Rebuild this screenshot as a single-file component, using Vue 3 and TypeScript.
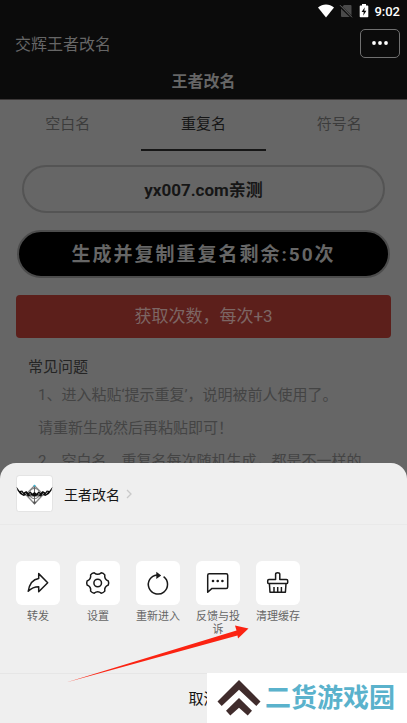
<script setup lang="ts">
import { ref } from 'vue'

type IconName = 'forward' | 'settings' | 'reload' | 'feedback' | 'clean'

interface Action {
  icon: IconName
  label: string
}

const tabs: string[] = ['空白名', '重复名', '符号名']
const activeTab = ref<number>(1)
const nickname = ref<string>('yx007.com亲测')
const remaining = ref<number>(50)

const faq: string[] = [
  '1、进入粘贴‘提示重复’，说明被前人使用了。',
  '请重新生成然后再粘贴即可！',
  '2、空白名、重复名每次随机生成，都是不一样的',
]

const actions: Action[] = [
  { icon: 'forward', label: '转发' },
  { icon: 'settings', label: '设置' },
  { icon: 'reload', label: '重新进入' },
  { icon: 'feedback', label: '反馈与投诉' },
  { icon: 'clean', label: '清理缓存' },
]

// Six-toothed gear outline with soft dips between the teeth
function gearPath(cx: number, cy: number, outer: number, dip: number): string {
  const at = (r: number, deg: number): string => {
    const a = (deg * Math.PI) / 180
    return `${(cx + r * Math.cos(a)).toFixed(2)} ${(cy + r * Math.sin(a)).toFixed(2)}`
  }
  let d = `M${at(outer, -11)}`
  for (let k = 0; k < 6; k++) {
    const t = k * 60
    d += `Q${at(outer + 0.6, t)} ${at(outer, t + 11)}Q${at(dip, t + 30)} ${at(outer, t + 49)}`
  }
  return d + 'Z'
}
const gear = gearPath(21.7, 22, 10.8, 7.4)
</script>

<template>
  <div class="screen">
    <header class="header">
      <div class="status">
        <svg class="status-icon wifi" viewBox="0 0 16 14" aria-hidden="true">
          <path d="M0 3.6C4.6-.6 11.4-.6 16 3.6L8 13.4Z" fill="#fff" />
        </svg>
        <svg class="status-icon sim" viewBox="0 0 14 14" aria-hidden="true">
          <path d="M5 1h6.500q1 0 1 1v10.500q0 .5-.5.500H3q-1 0-1-1V4Z" fill="#4a4a4a" />
          <path d="M.5 1.500 13 13.500" stroke="#0b0b0b" stroke-width="2.400" />
          <path d="M1 1.200 13 13.300" stroke="#666" stroke-width="1" />
        </svg>
        <svg class="status-icon battery" viewBox="0 0 10 14" aria-hidden="true">
          <path d="M3 0h4v1.500h1.500q.8 0 .8.800v10.200q0 .8-.8.800h-7q-.8 0-.8-.8V2.300q0-.8.8-.8H3Z" fill="#fff" />
          <path d="M5.800 3.200 2.600 8H4.700L4.200 11.800 7.400 6.800H5.300Z" fill="#0b0b0b" />
        </svg>
        <span class="time">9:02</span>
      </div>
      <div class="nav">
        <span class="app-name">交辉王者改名</span>
        <button class="more" type="button" aria-label="更多">
          <svg viewBox="0 0 16 4" aria-hidden="true">
            <circle cx="2" cy="2" r="1.900" />
            <circle cx="8" cy="2" r="1.900" />
            <circle cx="14" cy="2" r="1.900" />
          </svg>
        </button>
      </div>
      <h1 class="title">王者改名</h1>
    </header>

    <nav class="tabs">
      <button
        v-for="(tab, i) in tabs"
        :key="tab"
        type="button"
        class="tab"
        :class="{ active: i === activeTab }"
        @click="activeTab = i"
      >
        {{ tab }}
      </button>
    </nav>

    <main class="content">
      <input v-model="nickname" class="name-input" type="text" aria-label="名字" />
      <button class="generate" type="button">生成并复制重复名剩余:{{ remaining }}次</button>
      <button class="earn" type="button">获取次数，每次+3</button>
      <section class="faq">
        <h2>常见问题</h2>
        <p v-for="line in faq" :key="line">{{ line }}</p>
      </section>
    </main>

    <section class="sheet">
      <a class="app-row" href="#">
        <svg class="app-icon" viewBox="0 0 36 36" aria-hidden="true">
          <rect x=".5" y=".5" width="35" height="35" rx="3" fill="#fff" stroke="#e4e4e4" />
          <path d="M18 10.500 26.500 19 18 28 9.500 19Z" fill="none" stroke="#888" stroke-width="1.300" />
          <circle cx="18" cy="18" r="5" fill="none" stroke="#888" />
          <path d="M18 11V28M12 20.500H24" stroke="#666" />
          <path d="M.5 11.500 3.500 15.500 6 15 7.500 17 10 15.500 12 17.500 14 16 16 18 18 16.500 20 18 22 16 24 17.500 26 15.500 28.500 17 30 15 32.500 15.500 35.500 11.500 34.500 15 32 18.500 28.500 20.500 26 19.500 24 21 21.500 19.800 18 21 14.500 19.800 12 21 10 19.500 7.500 20.500 4 18.500 1.500 15Z" fill="#0c0c0c" />
          <path d="M5 16.500 7 18.500M31 16.500 29 18.500M9 18l1.500 1M27 18l-1.500 1M13 18.500h1.500M21.500 18.500H23" stroke="#e4e4e4" stroke-width=".8" />
          <path d="M16 26h4l-2 2.800Z" fill="#555" />
          <circle cx="18" cy="10.500" r="1" fill="#36b7d6" />
        </svg>
        <span class="app-label">王者改名</span>
        <svg class="chevron" viewBox="0 0 6 10" aria-hidden="true">
          <path d="M1 1 5 5 1 9" fill="none" stroke="#c9c9c9" stroke-width="1.300" />
        </svg>
      </a>

      <div class="actions">
        <button v-for="action in actions" :key="action.label" class="action" type="button">
          <svg class="tile" viewBox="0 0 44 44" aria-hidden="true">
            <path
              v-if="action.icon === 'forward'"
              d="M22.700 12.600 31.700 21.700 22.700 30.800V25.800C18.500 25.800 15.200 27.300 12.200 30.300 13.300 23.700 16.700 18.300 22.700 17.500Z"
            />
            <g v-else-if="action.icon === 'settings'">
              <path :d="gear" />
              <circle cx="21.700" cy="22" r="3.800" />
            </g>
            <g v-else-if="action.icon === 'reload'">
              <path d="M27.600 15.700A9.600 9.600 0 1 1 21 13.900" />
              <path d="M20.300 10.800 25.200 14.400 20.300 18Z" class="solid" />
            </g>
            <g v-else-if="action.icon === 'feedback'">
              <path d="M11.700 31.300V14.200Q11.700 12.700 13.200 12.700H30.200Q31.700 12.700 31.700 14.200V25.900Q31.700 27.400 30.200 27.400H16Z" />
              <g class="solid">
                <circle cx="17" cy="20" r="1.300" />
                <circle cx="21.700" cy="20" r="1.300" />
                <circle cx="26.400" cy="20" r="1.300" />
              </g>
            </g>
            <g v-else>
              <path d="M19.600 18.500V13.200Q19.600 11.700 21.700 11.700T23.800 13.200V18.500H30.500Q31.700 18.500 31.700 19.700V21.400Q31.700 22.600 30.500 22.600H12.900Q11.700 22.600 11.700 21.400V19.700Q11.700 18.500 12.900 18.500Z" />
              <path d="M13.400 22.600 14 31.200H29.400L30 22.600M18 31V26M21.700 31V26M25.400 31V26" />
            </g>
          </svg>
          <span class="action-label">{{ action.label }}</span>
        </button>
      </div>

      <button class="cancel" type="button">取消</button>

      <svg class="pointer" viewBox="0 0 184 60" aria-hidden="true">
        <path d="M0 57.500 170.500 5.500 169 .5 182.500 3.500 172 13.500 171.500 10.500Z" fill="#fb2312" />
      </svg>

      <div class="brand">
        <svg class="brand-mark" viewBox="0 0 44 38" aria-hidden="true">
          <path d="M22 1 43.500 22.500 39.300 27 22 10.700 4.700 27 .5 22.500Z" />
          <path d="M22 19 35 31.800 30.700 36.500 22 28.700 13.300 36.500 9 31.800Z" />
        </svg>
        <span class="brand-name">二货游戏园</span>
      </div>
    </section>
  </div>
</template>

<style>
body {
  margin: 0;
  overflow: hidden;
}
</style>

<style scoped>
.screen {
  position: relative;
  height: 100vh;
  overflow: hidden;
  background: #666;
  font-family: Roboto, 'Noto Sans CJK SC', sans-serif;
}
.screen * {
  box-sizing: border-box;
}
button,
input {
  margin: 0;
  padding: 0;
  border: 0;
  background: none;
  font-family: inherit;
}
.header {
  background: #0b0b0b;
  border-bottom: 1px solid #3c3838;
}
.status {
  display: flex;
  justify-content: flex-end;
  align-items: center;
  height: 22px;
  padding-right: 7px;
}
.status-icon {
  height: 14px;
}
.wifi {
  width: 16px;
  margin-right: 5px;
}
.sim {
  width: 14px;
  margin-right: 6px;
}
.battery {
  width: 10px;
  margin-right: 5px;
}
.time {
  color: #fff;
  font-size: 13px;
  font-weight: 500;
}
.nav {
  display: flex;
  justify-content: space-between;
  align-items: center;
  height: 42px;
  padding: 0 7px 0 15px;
}
.app-name {
  color: #666;
  font-size: 16px;
}
.more {
  display: flex;
  justify-content: center;
  align-items: center;
  width: 40px;
  height: 29px;
  border: 1px solid #707070;
  border-radius: 5px;
}
.more svg {
  width: 16px;
  height: 4px;
  fill: #fff;
}
.title {
  margin: 0;
  height: 35px;
  line-height: 36px;
  color: #666;
  font-size: 16px;
  font-weight: 700;
  text-align: center;
}
.tabs {
  display: grid;
  grid-template-columns: repeat(3, 1fr);
}
.tab {
  height: 51px;
  margin: 0 5px;
  padding-bottom: 4px;
  border-bottom: 2px solid transparent;
  color: #3c3c3c;
  font-size: 15px;
}
.tab.active {
  border-bottom-color: #161616;
  color: #161616;
}
.content {
  display: flex;
  flex-direction: column;
  padding: 14px 16px 0;
}
.name-input {
  height: 48px;
  margin: 0 6px;
  padding-bottom: 2px;
  border: 2px solid #545454;
  border-radius: 24px;
  color: #161616;
  font-size: 17px;
  font-weight: 700;
  text-align: center;
}
.generate {
  height: 48px;
  margin: 17px 1px 0;
  padding-bottom: 4px;
  border: 2px solid #4c4c4c;
  border-radius: 24px;
  background: #000;
  color: #666;
  font-size: 19px;
  font-weight: 700;
  letter-spacing: 2px;
}
.earn {
  height: 43px;
  margin-top: 17px;
  padding-bottom: 4px;
  border-radius: 4px;
  background: #5c1f1b;
  color: #7c6664;
  font-size: 17px;
}
.faq {
  padding: 17px 12px 0;
}
.faq h2 {
  margin: 0;
  line-height: 24px;
  color: #242424;
  font-size: 15px;
  font-weight: 400;
}
.faq p {
  margin: 0 0 0 10px;
  line-height: 33px;
  color: #444;
  font-size: 15px;
  white-space: nowrap;
}
.sheet {
  position: absolute;
  right: 0;
  bottom: 0;
  left: 0;
  border-radius: 16px 16px 0 0;
  background: #efefef;
}
.app-row {
  display: flex;
  align-items: center;
  height: 62px;
  padding: 0 16px;
  border-bottom: 1px solid #e9e9e9;
  color: #161616;
  text-decoration: none;
}
.app-icon {
  width: 37px;
  height: 37px;
}
.app-label {
  margin-left: 11px;
  font-size: 14px;
}
.chevron {
  width: 6px;
  height: 10px;
  margin-left: 6px;
}
.actions {
  display: flex;
  align-items: flex-start;
  gap: 16px;
  height: 148px;
  padding: 36px 16px 0;
}
.action {
  display: flex;
  flex-direction: column;
  align-items: center;
  gap: 5px;
  width: 44px;
}
.tile {
  width: 44px;
  height: 44px;
  border-radius: 6px;
  background: #fff;
  fill: none;
  stroke: #1a1a1a;
  stroke-width: 1.5;
  stroke-linejoin: round;
}
.solid {
  fill: #1a1a1a;
  stroke: none;
}
.action-label {
  color: #666;
  font-size: 11px;
  line-height: 13px;
  text-align: center;
}
.cancel {
  display: block;
  width: 100%;
  height: 50px;
  padding-bottom: 2px;
  border-top: 1px solid #e6e6e6;
  color: #161616;
  font-size: 15px;
}
.pointer {
  position: absolute;
  bottom: 38px;
  left: 66px;
  width: 184px;
  height: 60px;
}
.brand {
  position: absolute;
  right: 0;
  bottom: 0;
  display: flex;
  align-items: center;
  gap: 4px;
  width: 200px;
  height: 50px;
  padding-left: 10px;
  background: #fff;
}
.brand-mark {
  width: 44px;
  height: 38px;
  flex: none;
  fill: #402c2c;
}
.brand-name {
  color: #5ab2cc;
  font-size: 26px;
  font-weight: 700;
  line-height: 50px;
  white-space: nowrap;
}
</style>
